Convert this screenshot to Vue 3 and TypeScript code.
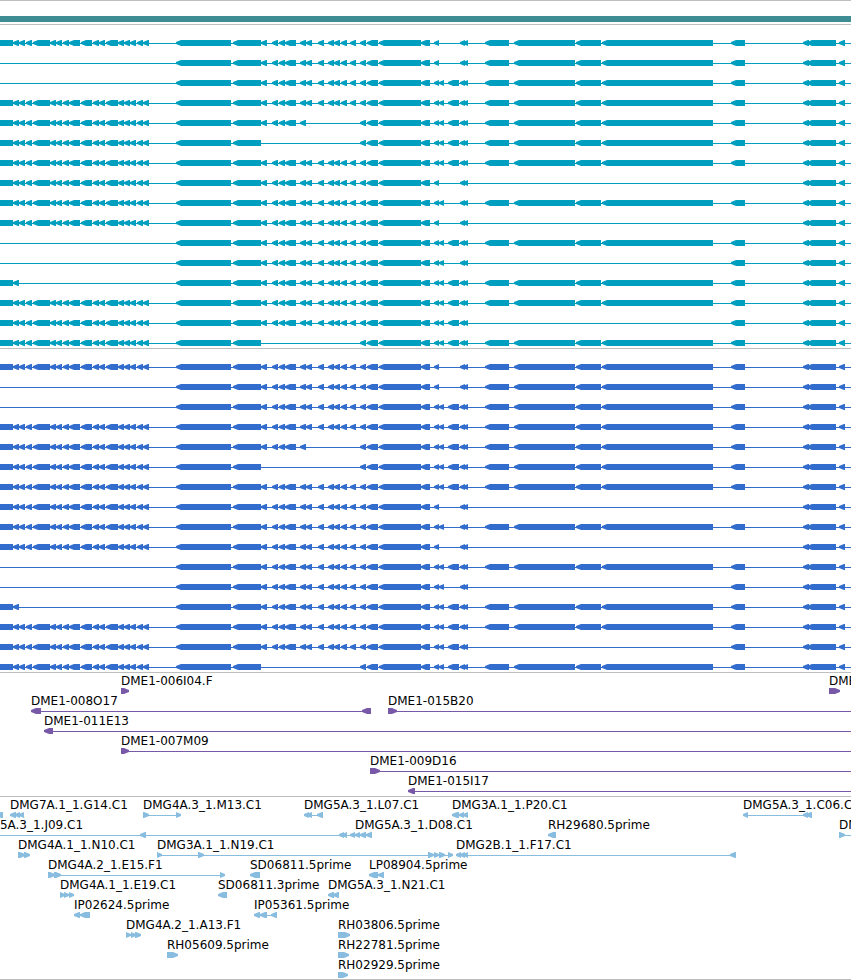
<script setup lang="ts">
type Block = [start: number, end: number]

interface Feature {
  name?: string
  labelX?: number
  dir: 'left' | 'right'
  blocks: Block[]
  from?: number
  to?: number
}

interface Track {
  id: string
  title: string
  lanes: Feature[][]
}

const OFF_LEFT = -60
const OFF_RIGHT = 4000
const TOP = 12
const BOTTOM = 18
const TIP_TOP = 14
const TIP_BOTTOM = 16

const tail: Block[] = [
  [13, 19], [19, 25], [26, 32], [33, 50], [50, 56], [56, 62], [63, 69], [69, 80], [81, 92],
  [93, 99], [99, 105], [106, 118], [118, 124], [124, 130], [130, 136], [137, 143], [143, 149],
]
const core: Block[] = [[176, 231], [233, 261]]
const midStart: Block[] = [[261, 267], [272, 278], [279, 285], [285, 296], [300, 306]]
const midEnd: Block[] = [[306, 312], [318, 324], [328, 334], [334, 340], [341, 347], [350, 356]]
const body: Block[] = [[360, 366], [367, 378], [379, 421], [421, 430], [434, 439]]
const extra: Block = [439, 444]
const wide: Block = [448, 459]
const pair: Block[] = [[460, 465], [463, 468]]
const large: Block[] = [[485, 509], [514, 575], [576, 601], [602, 713]]
const single: Block = [731, 745]
const head: Block[] = [[803, 809], [807, 836], [839, 845]]

// Exon groups: T full tail, t first tail exons, m first half and M whole middle,
// e / w small exons, L large exons, s single exon.
const isoforms = [
  'TMLs', 'MLs', 'MewLs', 'TMewLs', 'TmewLs', 'TewLs', 'TMewLs', 'TM',
  'TMeLs', 'TM', 'MewLs', 'Mes', 'tMewLs', 'TMewLs', 'TMews', 'TewLs',
]

function transcript(code: string): Feature[] {
  const has = (c: string) => code.includes(c)
  const blocks: Block[] = []
  if (has('T') || has('t')) blocks.push([-20, 13])
  if (has('T')) blocks.push(...tail)
  if (has('t')) blocks.push(tail[0])
  blocks.push(...core)
  if (has('M') || has('m')) blocks.push(...midStart)
  if (has('M')) blocks.push(...midEnd)
  blocks.push(...body)
  if (has('e')) blocks.push(extra)
  if (has('w')) blocks.push(wide)
  blocks.push(...pair)
  if (has('L')) blocks.push(...large)
  if (has('s')) blocks.push(single)
  blocks.push(...head)
  return [{ dir: 'left', blocks, from: OFF_LEFT, to: OFF_RIGHT }]
}

function feature(name: string, dir: 'left' | 'right', blocks: Block[], from?: number, to?: number, labelX?: number): Feature {
  return { name, dir, blocks, from, to, labelX }
}

const clones: Feature[][] = [
  [feature('DME1-006I04.F', 'right', [[121, 129]]), feature('DME1-0', 'right', [[829, 840]])],
  [
    feature('DME1-008O17', 'left', [[31, 41], [362, 371]]),
    feature('DME1-015B20', 'right', [[388, 397]], 388, OFF_RIGHT),
  ],
  [feature('DME1-011E13', 'left', [[44, 53]], 44, OFF_RIGHT)],
  [feature('DME1-007M09', 'right', [[121, 129]], 121, OFF_RIGHT)],
  [feature('DME1-009D16', 'right', [[370, 380]], 370, OFF_RIGHT)],
  [feature('DME1-015I17', 'left', [[408, 415]], 408, OFF_RIGHT)],
]

const ests: Feature[][] = [
  [
    feature('', 'left', [[-4, 3]]),
    feature('DMG7A.1_1.G14.C1', 'left', [[10, 16], [15, 20], [19, 24]]),
    feature('DMG4A.3_1.M13.C1', 'right', [[143, 149], [176, 181]]),
    feature('DMG5A.3_1.L07.C1', 'left', [[304, 309], [307, 312], [317, 323]]),
    feature('DMG3A.1_1.P20.C1', 'left', [[452, 459], [459, 464], [463, 468]]),
    feature('DMG5A.3_1.C06.C1', 'left', [[743, 748], [803, 808], [806, 812]]),
  ],
  [
    feature('DMG5A.3_1.J09.C1', 'left', [[140, 146], [339, 344], [342, 347]], OFF_LEFT, 347, -29),
    feature('DMG5A.3_1.D08.C1', 'left', [[350, 355], [355, 360], [360, 366], [366, 372]], 347, 372, 355),
    feature('RH29680.5prime', 'left', [[548, 556]]),
    feature('DMG5', 'right', [[839, 845]], 839, OFF_RIGHT),
  ],
  [
    feature('DMG4A.1_1.N10.C1', 'right', [[18, 25], [24, 30]]),
    feature('DMG3A.1_1.N19.C1', 'right', [[157, 162], [198, 204], [428, 434], [434, 439], [439, 445], [448, 453]]),
    feature('DMG2B.1_1.F17.C1', 'left', [[456, 461], [460, 465], [464, 468], [730, 736]]),
  ],
  [
    feature('DMG4A.2_1.E15.F1', 'right', [[48, 55], [54, 61], [220, 225]]),
    feature('SD06811.5prime', 'left', [[250, 260]]),
    feature('LP08904.5prime', 'left', [[369, 378], [378, 384]]),
  ],
  [
    feature('DMG4A.1_1.E19.C1', 'right', [[60, 65], [64, 69], [69, 74]]),
    feature('SD06811.3prime', 'left', [[218, 227]]),
    feature('DMG5A.3_1.N21.C1', 'left', [[328, 334], [333, 339]]),
  ],
  [
    feature('IP02624.5prime', 'left', [[74, 80], [80, 90]]),
    feature('IP05361.5prime', 'left', [[254, 260], [260, 267], [271, 277]]),
  ],
  [
    feature('DMG4A.2_1.A13.F1', 'right', [[126, 131], [131, 136], [135, 141]]),
    feature('RH03806.5prime', 'right', [[338, 350]]),
  ],
  [feature('RH05609.5prime', 'right', [[167, 178]]), feature('RH22781.5prime', 'right', [[338, 349]])],
  [feature('RH02929.5prime', 'right', [[338, 348]])],
]

const tracks: Track[] = [
  { id: 'transcript', title: 'Transcripts', lanes: isoforms.map(transcript) },
  { id: 'cds', title: 'Coding sequences', lanes: isoforms.map(transcript) },
  { id: 'clone', title: 'Clones', lanes: clones },
  { id: 'est', title: 'Sequence tags', lanes: ests },
]

function arrow([start, end]: Block, dir: 'left' | 'right'): string {
  const length = Math.min(5, end - start)
  const [tip, neck, base] = dir === 'left' ? [start, start + length, end] : [end, end - length, start]
  return `M${tip} ${TIP_TOP}L${neck} ${TOP}H${base}V${BOTTOM}H${neck}L${tip} ${TIP_BOTTOM}Z`
}

function lineFrom(f: Feature): number {
  return f.from ?? f.blocks[0][0] + 1
}

function lineTo(f: Feature): number {
  return f.to ?? f.blocks[f.blocks.length - 1][1] - 1
}
</script>

<template>
  <main class="browser">
    <section class="ruler">
      <div class="region"></div>
    </section>
    <section v-for="track in tracks" :key="track.id" class="track" :class="track.id" :aria-label="track.title">
      <svg v-for="(lane, i) in track.lanes" :key="i" class="lane">
        <g v-for="(f, j) in lane" :key="j">
          <rect :x="lineFrom(f)" y="15" :width="lineTo(f) - lineFrom(f)" height="1" />
          <path v-for="(b, k) in f.blocks" :key="k" :d="arrow(b, f.dir)" />
          <text v-if="f.name" class="label" :x="f.labelX ?? f.blocks[0][0]" y="9">{{ f.name }}</text>
        </g>
      </svg>
    </section>
  </main>
</template>

<style>
body {
  background: #ffffff;
}
</style>

<style scoped>
.browser {
  overflow: hidden;
  box-shadow: inset 0 -1px #bebebe;
  font-family: "DejaVu Sans", sans-serif;
  font-size: 12px;
}

.ruler {
  padding: 15px 0 2px;
  border-top: 1px solid #bebebe;
}

.region {
  height: 6px;
  background: #3f8d94;
}

.track {
  display: flex;
  flex-direction: column;
  padding-top: 3px;
  border-top: 1px solid #bebebe;
}

.lane {
  display: block;
  width: 100%;
  height: 20px;
  overflow: visible;
}

.transcript {
  fill: #009ebf;
}

.cds {
  fill: #326dcd;
}

.clone {
  fill: #7859a8;
}

.est {
  fill: #89bddf;
}

.label {
  fill: #000000;
}
</style>
